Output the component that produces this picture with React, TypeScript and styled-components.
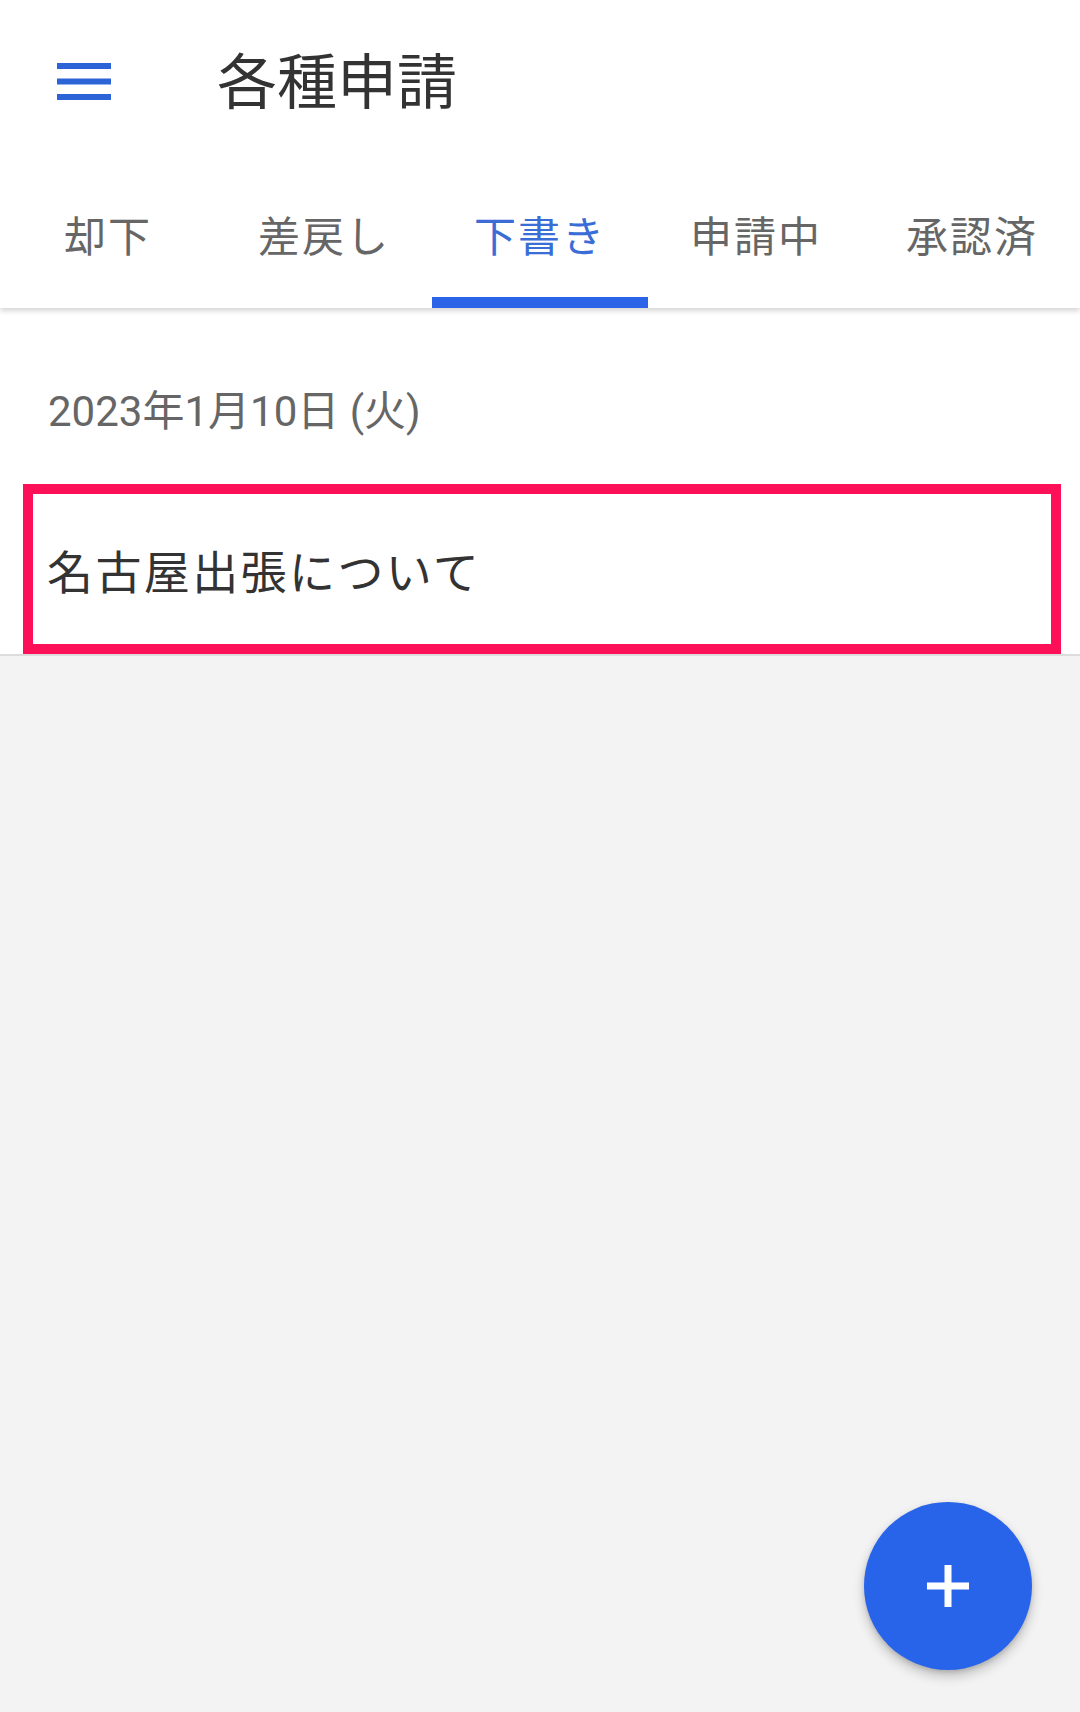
import React, { useState } from "react";
import styled, { createGlobalStyle } from "styled-components";

const tabs = ["却下", "差戻し", "下書き", "申請中", "承認済"];

const drafts = [
  {
    date: "2023年1月10日 (火)",
    items: [{ id: 1, title: "名古屋出張について", selected: true }],
  },
];

const MenuIcon: React.FC = () => (
  <svg width="54" height="37" viewBox="0 0 54 37">
    <rect x="0" y="0" width="54" height="6" fill="#2c63d6" />
    <rect x="0" y="15.5" width="54" height="6" fill="#2c63d6" />
    <rect x="0" y="31" width="54" height="6" fill="#2c63d6" />
  </svg>
);

const PlusIcon: React.FC = () => (
  <svg width="42" height="42" viewBox="0 0 42 42">
    <rect x="17.5" y="0" width="7" height="42" fill="#fff" />
    <rect x="0" y="17.5" width="42" height="7" fill="#fff" />
  </svg>
);

const App: React.FC = () => {
  const [activeTab, setActiveTab] = useState<number>(2);

  return (
    <>
      <GlobalStyle />
      <Page>
        <Header>
          <Toolbar>
            <MenuButton>
              <MenuIcon />
            </MenuButton>
            <Title>各種申請</Title>
          </Toolbar>
          <TabBar>
            {tabs.map((label, index) => (
              <Tab
                key={label}
                $active={index === activeTab}
                onClick={() => setActiveTab(index)}
              >
                {label}
              </Tab>
            ))}
          </TabBar>
        </Header>

        <List>
          {drafts.map((group) => (
            <Group key={group.date}>
              <DateLabel>{group.date}</DateLabel>
              {group.items.map((item) => (
                <Item key={item.id}>
                  <ItemTitle>{item.title}</ItemTitle>
                  {item.selected && <Highlight />}
                </Item>
              ))}
            </Group>
          ))}
          <Empty />
        </List>

        <Fab aria-label="新規作成">
          <PlusIcon />
        </Fab>
      </Page>
    </>
  );
};

export default App;

const GlobalStyle = createGlobalStyle`
  body {
    margin: 0;
    background-color: #f4f3f4;
    font-family: Roboto, "Noto Sans CJK JP", sans-serif;
  }
`;

const Page = styled.div`
  position: relative;
  min-height: 1712px;
  display: flex;
  flex-direction: column;
  background-color: #f4f3f4;
`;

const Header = styled.header`
  position: relative;
  z-index: 1;
  background-color: #fff;
  box-shadow: 0 3px 5px rgba(0, 0, 0, 0.16);
`;

const Toolbar = styled.div`
  height: 160px;
  display: flex;
  align-items: center;
  padding-left: 57px;
`;

const MenuButton = styled.button`
  display: flex;
  margin-top: 2px;
  padding: 0;
  border: none;
  background: none;
  cursor: pointer;
`;

const Title = styled.h1`
  margin: 0 0 6px 106px;
  font-family: "Noto Sans CJK JP", sans-serif;
  font-size: 60px;
  font-weight: 400;
  color: #333;
`;

const TabBar = styled.nav`
  display: grid;
  grid-template-columns: repeat(5, 1fr);
  height: 148px;
`;

const Tab = styled.div<{ $active: boolean }>`
  display: flex;
  align-items: center;
  justify-content: center;
  padding-top: 10px;
  font-family: "Noto Sans CJK JP", sans-serif;
  font-size: 42px;
  letter-spacing: 2px;
  color: ${(props) => (props.$active ? "#3a6dd6" : "#666")};
  border-bottom: 11px solid
    ${(props) => (props.$active ? "#2b64e6" : "transparent")};
  cursor: pointer;
`;

const List = styled.main`
  flex: 1;
  display: flex;
  flex-direction: column;
`;

const Group = styled.section`
  background-color: #fff;
`;

const DateLabel = styled.div`
  padding: 80px 0 48px 48px;
  line-height: 48px;
  font-size: 42px;
  color: #666;
`;

const Item = styled.div`
  position: relative;
  height: 170px;
  display: flex;
  align-items: center;
  padding-left: 47px;
  border-bottom: 2px solid #dcdcdc;
`;

const ItemTitle = styled.div`
  font-family: "Noto Sans CJK JP", sans-serif;
  font-size: 46px;
  letter-spacing: 2.4px;
  color: #333;
`;

const Highlight = styled.div`
  position: absolute;
  top: 0;
  left: 23px;
  right: 19px;
  height: 170px;
  box-sizing: border-box;
  border: 10px solid #fe1058;
  pointer-events: none;
`;

const Empty = styled.div`
  flex: 1;
`;

const Fab = styled.button`
  position: absolute;
  right: 48px;
  bottom: 42px;
  width: 168px;
  height: 168px;
  display: flex;
  align-items: center;
  justify-content: center;
  padding: 0;
  border: none;
  border-radius: 50%;
  background-color: #2864ea;
  box-shadow: 0 6px 12px rgba(0, 0, 0, 0.22), 0 2px 4px rgba(0, 0, 0, 0.12);
  cursor: pointer;
`;
